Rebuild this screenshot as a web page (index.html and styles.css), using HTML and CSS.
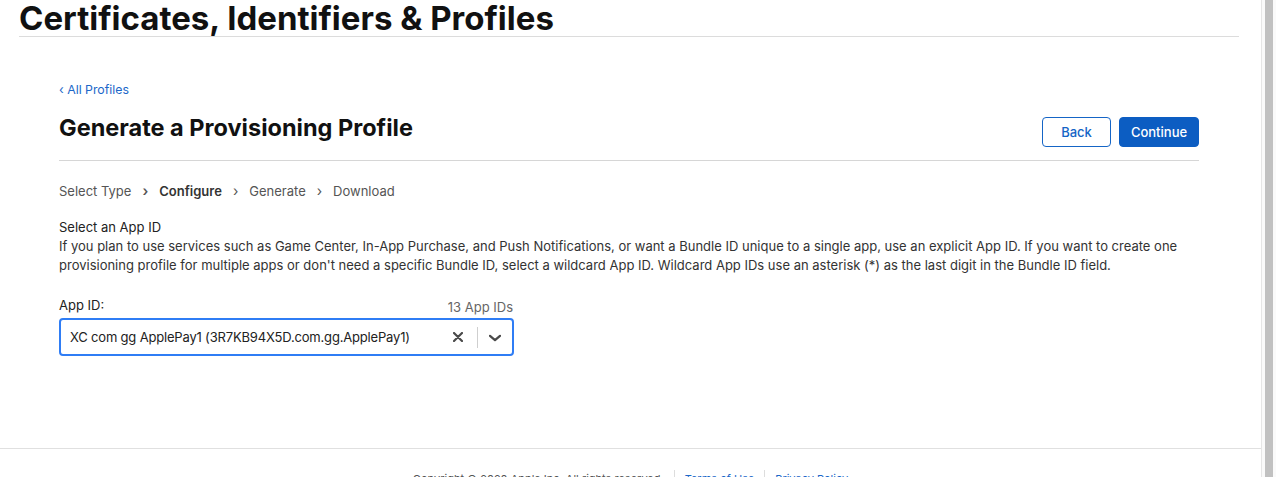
FILE: index.html
```html
<!DOCTYPE html>
<html lang="en">
<head>
    <meta charset="UTF-8">
    <meta name="viewport" content="width=device-width, initial-scale=1.0">
    <title>Certificates, Identifiers &amp; Profiles</title>
    <link rel="stylesheet" href="styles.css">
</head>
<body>
    <div class="page">
        <header class="top">
            <h1>Certificates, Identifiers &amp; Profiles</h1>
        </header>

        <main class="content">
            <a class="back-link" href="#">&lsaquo; All Profiles</a>

            <!-- title row with the wizard buttons -->
            <div class="title-row">
                <h2>Generate a Provisioning Profile</h2>
                <div class="actions">
                    <button type="button" class="btn btn-outline">Back</button>
                    <button type="button" class="btn btn-primary">Continue</button>
                </div>
            </div>

            <ol class="steps">
                <li>Select Type</li>
                <li class="current">Configure</li>
                <li>Generate</li>
                <li>Download</li>
            </ol>

            <section class="intro">
                <h3>Select an App ID</h3>
                <p>If you plan to use services such as Game Center, In-App Purchase, and Push Notifications, or want a Bundle ID unique to a single app, use an explicit App ID. If you want to create one provisioning profile for multiple apps or don't need a specific Bundle ID, select a wildcard App ID. Wildcard App IDs use an asterisk (*) as the last digit in the Bundle ID field.</p>
            </section>

            <div class="field">
                <div class="field-head">
                    <label for="appId">App ID:</label>
                    <span class="count">13 App IDs</span>
                </div>
                <div class="select" id="appId">
                    <span class="select-value">XC com gg ApplePay1 (3R7KB94X5D.com.gg.ApplePay1)</span>
                    <span class="select-clear">
                        <svg width="10" height="10" viewBox="0 0 10 10"><path d="M1 1 L9 9 M9 1 L1 9" stroke="#4a4a4a" stroke-width="2.2" stroke-linecap="round"/></svg>
                    </span>
                    <span class="select-sep"></span>
                    <span class="select-arrow">
                        <svg width="12" height="8" viewBox="0 0 12 8"><path d="M1 1.8 L6 6.2 L11 1.8" fill="none" stroke="#4a4a4a" stroke-width="2.2" stroke-linecap="round" stroke-linejoin="round"/></svg>
                    </span>
                </div>
            </div>
        </main>

        <footer class="bottom">
            <span>Copyright &copy; 2020 Apple Inc. All rights reserved.</span>
            <a href="#">Terms of Use</a>
            <a href="#">Privacy Policy</a>
        </footer>
    </div>

    <div class="scrollbar"><div class="thumb"></div></div>
</body>
</html>
```

FILE: styles.css
```css
html, body {
    height: 100%;
}

body {
    margin: 0;
    display: flex;
    overflow: hidden;
    background-color: #fff;
    font-family: Inter, 'Helvetica Neue', Arial, sans-serif;
    color: #333;
}

.page {
    flex: 1;
    min-width: 0;
}

/* site header */
.top {
    margin: 0 22px 0 19px;
    border-bottom: 1px solid #dcdcdc;
}

.top h1 {
    margin: 0;
    font-size: 33px;
    line-height: 36px;
    font-weight: 700;
    color: #111;
}

.content {
    margin: 0 62px 0 59px;
}

.back-link {
    display: block;
    margin-top: 44px;
    font-size: 12.3px;
    line-height: 18px;
    color: #1c68c9;
    text-decoration: none;
}

.title-row {
    display: flex;
    justify-content: space-between;
    align-items: center;
    height: 39px;
    margin-top: 9px;
    padding-bottom: 13px;
    border-bottom: 1px solid #d6d6d6;
}

.title-row h2 {
    margin: 0;
    font-size: 23.5px;
    line-height: 28px;
    font-weight: 700;
    color: #111;
}

.actions {
    align-self: flex-end;
    display: flex;
    gap: 8px;
}

.btn {
    height: 30px;
    border-radius: 4px;
    font-family: inherit;
    font-size: 13px;
    font-weight: 500;
    padding: 0;
    cursor: pointer;
}

.btn-outline {
    width: 69px;
    background-color: #fff;
    border: 1px solid #1565c6;
    color: #1565c6;
}

.btn-primary {
    width: 80px;
    background-color: #0c5dc2;
    border: 1px solid #0c5dc2;
    color: #fff;
}

/* wizard steps */
.steps {
    display: flex;
    list-style: none;
    margin: 20px 0 0;
    padding: 0;
    font-size: 13px;
    line-height: 20px;
    color: #555;
}

.steps li + li::before {
    content: "\203A";
    margin: 0 11px 0 11px;
    font-size: 14px;
    color: #555;
}

.steps .current {
    font-weight: 600;
    color: #333;
}

.intro {
    margin-top: 17px;
    font-size: 13px;
    line-height: 19px;
}

.intro h3 {
    margin: 0;
    font-size: 13px;
    font-weight: 400;
    color: #222;
}

.intro p {
    margin: 0;
    color: #333;
}

.field {
    width: 455px;
    margin-top: 21px;
}

.field-head {
    display: flex;
    justify-content: space-between;
    align-items: flex-end;
    font-size: 13px;
    line-height: 19px;
}

.field-head label {
    color: #222;
}

.count {
    position: relative;
    top: 2px;
    margin-right: 1px;
    color: #666;
}

.select {
    display: flex;
    align-items: center;
    height: 34px;
    margin-top: 3px;
    padding-left: 9px;
    border: 2px solid #2f7df5;
    border-radius: 4px;
    font-size: 13px;
    color: #222;
}

.select-value {
    flex: 1;
    letter-spacing: -0.18px;
}

.select-clear {
    display: flex;
    margin-right: 14px;
}

.select-sep {
    width: 1px;
    height: 21px;
    background-color: #cfcfcf;
}

.select-arrow {
    display: flex;
    margin: 1px 11px 0 11px;
}

/* footer */
.bottom {
    margin-top: 92px;
    border-top: 1px solid #e0e0e0;
    padding-top: 21px;
    display: flex;
    justify-content: center;
    font-size: 11px;
    line-height: 18px;
    color: #555;
}

.bottom a {
    margin-left: 10px;
    padding-left: 10px;
    border-left: 1px solid #ddd;
    color: #1c68c9;
    text-decoration: none;
}

/* window scrollbar */
.scrollbar {
    flex: 0 0 15px;
    box-sizing: border-box;
    height: 100%;
    padding: 0 3px;
    border-left: 1px solid #e6e6e6;
    background-color: #fafafa;
}

.thumb {
    width: 8px;
    height: 100%;
    background-color: #c1c1c1;
}
```
